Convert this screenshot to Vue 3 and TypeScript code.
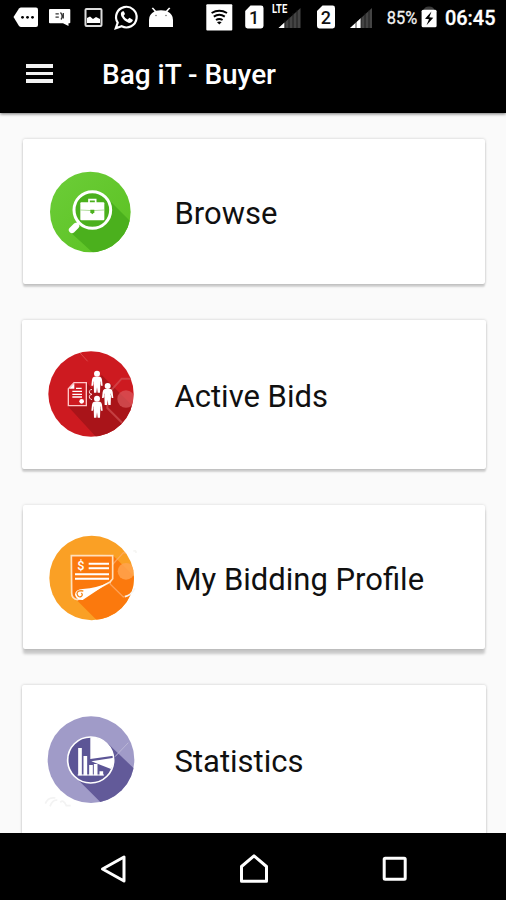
<script setup lang="ts">
interface MenuEntry {
  id: 'browse' | 'bids' | 'profile' | 'stats'
  label: string
}

const entries: MenuEntry[] = [
  { id: 'browse', label: 'Browse' },
  { id: 'bids', label: 'Active Bids' },
  { id: 'profile', label: 'My Bidding Profile' },
  { id: 'stats', label: 'Statistics' },
]
</script>

<template>
  <div class="screen">
    <header class="status-bar">
      <!-- notifications -->
      <svg width="42" height="36" viewBox="0 0 42 36">
        <path d="M13.5 17 19 8.5Q20 7.5 21 7.5H36Q38 7.5 38 9.5V25Q38 27 36 27H21Q20 27 19 26Z" fill="#fff" />
        <g fill="#000"><circle cx="22.5" cy="17.3" r="1.4" /><circle cx="27.5" cy="17.3" r="1.4" /><circle cx="32.5" cy="17.3" r="1.4" /></g>
      </svg>
      <svg width="36" height="36" viewBox="42 0 36 36">
        <path d="M50 9H69.5Q70.3 9 70.3 10V22.5Q70.3 23.3 69.5 23.3H68.5V26L63 23.3H50Q49 23.3 49 22.5V10Q49 9 50 9Z" fill="#fff" />
        <path d="M55.5 13.8H58.8M55.5 17.2H58.8M60.5 12.5Q63.5 16 61 19.5M63.3 13V18.5" fill="none" stroke="#333" stroke-width="1.3" />
      </svg>
      <svg width="32" height="36" viewBox="78 0 32 36">
        <rect x="85.5" y="9" width="16" height="17" rx="1" fill="none" stroke="#ddd" stroke-width="2" />
        <path d="M87 23V18L90 16.5 93 19 96 17 100 19V23Z" fill="#fff" />
      </svg>
      <svg width="34" height="36" viewBox="110 0 34 36">
        <path d="M115.8 28.2 117.7 22.7A10.3 10.3 0 1 1 121.7 26.3Z" fill="none" stroke="#fff" stroke-width="2.2" />
        <path d="M122 11.5Q120 13 121.5 16.5Q124 21 129 23Q132 23 133 20L129.5 17.8 127.6 19.5Q124.5 18 123.7 15.7L125 14 123.8 11.3Z" fill="#fff" />
      </svg>
      <svg width="56" height="36" viewBox="144 0 56 36">
        <path d="M149 27V20Q149 14 154.5 11.5L151.7 8.2 153 7.4 156 10.8Q161 9.5 166 10.8L169 7.4 170.4 8.2 167.5 11.5Q173 14 173 20V27Z" fill="#fff" />
        <g fill="#555"><circle cx="156" cy="15.5" r=".7" /><circle cx="166" cy="15.5" r=".7" /></g>
      </svg>
      <!-- connectivity -->
      <svg width="38" height="36" viewBox="200 0 38 36">
        <rect x="206.3" y="4.3" width="26" height="26.2" rx="1" fill="#fff" />
        <path d="M211.6 13Q219.3 8.5 227 13M213.8 16.6Q219.3 13 224.8 16.6M216 20Q219.3 17.8 222.6 20" fill="none" stroke="#000" stroke-width="2" />
        <path d="M217 22.2Q219.3 20.8 221.6 22.2L219.3 24.6Z" fill="#000" />
      </svg>
      <svg width="30" height="36" viewBox="238 0 30 36">
        <path d="M250.5 5.6H261Q263.5 5.6 263.5 8V26Q263.5 28.4 261 28.4H247.5Q245.2 28.4 245.2 26V11Z" fill="#fff" />
        <text class="sim" x="249" y="24">1</text>
      </svg>
      <svg width="40" height="36" viewBox="268 0 40 36">
        <path d="M278.5 28 300.5 8V28Z" fill="#444" />
        <path d="M278.5 28 284.5 22.6V28Z" fill="#fff" />
        <path d="M285 20V28M289 17V28M293 13V28M297 10V28" stroke="#151515" stroke-width=".8" />
        <text class="lte" x="272" y="12.7" textLength="15.2" lengthAdjust="spacingAndGlyphs">LTE</text>
      </svg>
      <svg width="34" height="36" viewBox="308 0 34 36">
        <path d="M322.5 5.6H332.7Q335 5.6 335 8V26Q335 28.4 332.7 28.4H319.3Q317 28.4 317 26V11Z" fill="#fff" />
        <text class="sim" x="320.8" y="24.3">2</text>
      </svg>
      <svg width="38" height="36" viewBox="342 0 38 36">
        <path d="M350 28 372 8V28Z" fill="#444" />
        <path d="M350 28 361 18V28Z" fill="#fff" />
        <path d="M356 21V28M361 18V28M365 13V28M369 10V28" stroke="#151515" stroke-width=".8" />
      </svg>
      <svg width="40" height="36" viewBox="380 0 40 36">
        <text class="percent" x="386.7" y="24.2" textLength="30.5" lengthAdjust="spacingAndGlyphs">85%</text>
      </svg>
      <svg width="20" height="36" viewBox="420 0 20 36">
        <path d="M424 10Q424 6.5 429 6.5T434 10Z" fill="#3a3a3a" />
        <rect x="421.6" y="9.8" width="15" height="17.4" rx="1.5" fill="#fff" />
        <path d="M431.5 11.5 425 18.8 429 19.3 426.5 25.3 433.3 17.8 429.3 17.2Z" fill="#000" />
      </svg>
      <svg width="66" height="36" viewBox="440 0 66 36">
        <text class="clock" x="445" y="25" textLength="50.5" lengthAdjust="spacingAndGlyphs">06:45</text>
      </svg>
    </header>

    <div class="app-bar">
      <div class="burger"><i /><i /><i /></div>
      <h1>Bag iT - Buyer</h1>
    </div>

    <main>
      <section v-for="entry in entries" :key="entry.id" class="card" :class="entry.id">
        <svg v-if="entry.id === 'browse'" class="badge" width="110" height="105" viewBox="0 0 330 315">
          <defs>
            <linearGradient id="green" x1="0" y1="0" x2="1" y2="1"><stop offset="0" stop-color="#6ccd38" /><stop offset="1" stop-color="#5bc122" /></linearGradient>
            <clipPath id="clipGreen"><circle cx="166" cy="156" r="121" /></clipPath>
          </defs>
          <circle cx="166" cy="156" r="121" fill="url(#green)" />
          <g clip-path="url(#clipGreen)">
            <path d="M214 112 330 228 230 330 108 218 150 190Z" fill="#4bb01d" />
          </g>
          <circle cx="172" cy="150" r="55" fill="#4bb01d" stroke="#fff" stroke-width="9" />
          <path d="M130 188 125 194" stroke="#fff" stroke-width="8" />
          <path d="M123 198 111 210" stroke="#fff" stroke-width="19" stroke-linecap="round" />
          <path d="M162 130V119H182V130" fill="none" stroke="#fff" stroke-width="5" />
          <rect x="136" y="127" width="72" height="54" rx="3" fill="#fff" />
          <path d="M136 150Q172 154 208 150" fill="none" stroke="#8ccb70" stroke-width="2" />
          <path d="M166 149H178V157L172 163 166 157Z" fill="#4bb01d" />
        </svg>

        <svg v-else-if="entry.id === 'bids'" class="badge" width="110" height="110" viewBox="0 0 330 330">
          <defs>
            <clipPath id="clipRed"><circle cx="168" cy="162" r="128" /></clipPath>
            <g id="person">
              <circle cx="0" cy="-23" r="9" />
              <path d="M-9-14H9Q14-12 15-5L17 13H12L9-2V9H-9V-2L-12 13H-17L-15-5Q-14-12-9-14Z" />
              <path d="M-10 5H10L9 34H2L0 18-2 34H-9Z" />
            </g>
          </defs>
          <circle cx="168" cy="162" r="128" fill="#cd1a20" />
          <g clip-path="url(#clipRed)">
            <path d="M200 105 330 235 210 320 98 198 155 195 155 127 170 145Z" fill="#a91419" />
            <path d="M330 116H260L217 164V204L265 252" fill="none" stroke="#d35457" stroke-width="6" opacity=".65" />
            <circle cx="273" cy="177" r="26" fill="#d95659" opacity=".75" />
            <path d="M129 32 158 64" stroke="#d94a4c" stroke-width="3" />
          </g>
          <path d="M117 128H154V197H100V146Z" fill="none" stroke="#ffc6c6" stroke-width="4" />
          <path d="M102 146 118 130V146Z" fill="#fff" />
          <path d="M123 145H140M112 154H141M112 163H141M112 171H141" stroke="#fff" stroke-width="4" />
          <circle cx="140" cy="184" r="7" fill="#fff" />
          <path d="M171 148Q160 150 164 160L171 163 164 166Q160 176 171 179" fill="none" stroke="#ffd7d7" stroke-width="3" />
          <g fill="#fff"><use href="#person" x="186" y="124" /><use href="#person" x="218" y="161" /><use href="#person" x="186" y="199" /></g>
        </svg>

        <svg v-else-if="entry.id === 'profile'" class="badge" width="110" height="110" viewBox="0 0 330 330">
          <defs><clipPath id="clipOrange"><circle cx="170" cy="159" r="127" /></clipPath></defs>
          <circle cx="170" cy="159" r="127" fill="#faa025" />
          <g clip-path="url(#clipOrange)">
            <path d="M232 89 330 187V310H210L112 212 109 92Z" fill="#fb790d" />
            <path d="M300 89 265 83 226 126V178L265 216 310 200" fill="none" stroke="#ffae6c" stroke-width="4" opacity=".75" />
            <circle cx="273" cy="139" r="25" fill="#ffa34f" opacity=".85" />
          </g>
          <path d="M109 92H233V161L225 171 128 224Q110 222 110 204Z" fill="#fb790d" stroke="#ffe0bd" stroke-width="5" />
          <path d="M224 171Q187 189 143 192Q120 194 120 209Q125 226 143 225Z" fill="#fff" />
          <path d="M145 198Q127 195 126 206Q129 219 139 214Q145 210 139 204" fill="none" stroke="#f58a22" stroke-width="4" />
          <path d="M161 116H222M161 130H222M120 148H222M120 161H222" stroke="#fff" stroke-width="6" />
          <text class="dollar" x="127" y="136">$</text>
          <path d="M295 79Q304 74 303 84M270 215Q286 212 300 190" fill="none" stroke="#f5f5f3" stroke-width="5" />
        </svg>

        <svg v-else class="badge" width="110" height="130" viewBox="0 0 330 390">
          <defs><clipPath id="clipPurple"><circle cx="168" cy="164" r="130" /></clipPath></defs>
          <path d="M31 296Q39 275 61 279M45 304Q53 283 67 286M76 292Q85 282 94 302H107" fill="none" stroke="#f3f3f3" stroke-width="5" />
          <circle cx="168" cy="164" r="130" fill="#a09bc8" />
          <g clip-path="url(#clipPurple)">
            <path d="M217 114 330 222V300L215 310 117 212Z" fill="#625a99" />
            <path d="M240 155 280 113" stroke="#bab6d6" stroke-width="3" />
          </g>
          <circle cx="167" cy="165" r="69" fill="#5c5596" stroke="#fff" stroke-width="5" />
          <path d="M166 97A69 69 0 0 1 235 152L166 162Z" fill="#fff" />
          <path d="M169 169 237 158Q237 178 228 192Z" fill="#fff" />
          <path d="M135 129V211M151 153V211M168 180V211M182 177V211M199 199V211" stroke="#fff" stroke-width="11" />
          <path d="M128 210H207" stroke="#fff" stroke-width="3" />
        </svg>
        <span class="label">{{ entry.label }}</span>
      </section>
    </main>

    <nav class="nav-bar">
      <svg width="30" height="36" viewBox="0 0 30 36"><path d="M3.5 18 25 6V30Z" /></svg>
      <svg width="32" height="36" viewBox="1 0 32 36"><path d="M3.5 30.2V15.5L16 4.8 28.5 15.5V30.2Z" /></svg>
      <svg width="30" height="36" viewBox="0 0 30 36"><rect x="4.2" y="7.2" width="21" height="21" rx="1" /></svg>
    </nav>
  </div>
</template>

<style>
body {
  margin: 0;
  overflow: hidden;
}
</style>

<style scoped>
.screen {
  width: 506px;
  height: 900px;
  display: flex;
  flex-direction: column;
  overflow: hidden;
  background: #fafafa;
  font-family: Roboto, sans-serif;
  color: #101010;
}

svg {
  display: block;
  flex: none;
}

.status-bar {
  display: flex;
  flex: none;
  height: 36px;
  background: #000;
}

.sim {
  font-size: 18px;
  font-weight: 500;
  fill: #111;
}

.lte {
  font-size: 12px;
  font-weight: 700;
  fill: #fff;
}

.percent {
  font-size: 17.5px;
  fill: #f2f2f2;
  stroke: #f2f2f2;
  stroke-width: 0.3px;
}

.clock {
  font-size: 20px;
  font-weight: 500;
  fill: #fff;
  stroke: #fff;
  stroke-width: 0.3px;
}

.dollar {
  font-size: 38px;
  font-weight: 500;
  fill: #fff;
}

.app-bar {
  display: flex;
  flex: none;
  align-items: center;
  box-sizing: border-box;
  height: 77px;
  padding: 0 0 2px 26px;
  background: #000;
  box-shadow: 0 1px 3px rgba(0, 0, 0, 0.55);
}

.burger {
  display: grid;
  gap: 4px;
  width: 27px;
  margin-right: 49px;
}

.burger i {
  height: 3.7px;
  background: #f2f2f2;
}

h1 {
  margin: 3px 0 0;
  font-size: 28px;
  line-height: 34px;
  font-weight: 500;
  letter-spacing: -0.02px;
  white-space: nowrap;
  color: #fff;
}

main {
  display: flex;
  flex: 1;
  flex-direction: column;
  min-height: 0;
  overflow: hidden;
  padding: 26px 20px 0 22px;
}

.card {
  display: flex;
  flex: none;
  align-items: flex-start;
  box-sizing: border-box;
  border-radius: 2px;
  background: #fff;
  box-shadow: 0 0 3px rgba(0, 0, 0, 0.2), 0 3px 2px rgba(0, 0, 0, 0.16);
}

.browse {
  height: 145px;
  margin: 0 1px 36px;
  padding: 21px 0 0 12px;
}

.bids {
  height: 149px;
  margin-bottom: 36px;
  padding: 20px 0 0 13px;
}

.profile {
  height: 144px;
  margin: 0 1px 36px;
  padding: 20px 0 0 12px;
  box-shadow: 0 0 3px rgba(0, 0, 0, 0.15), 0 5px 3px rgba(0, 0, 0, 0.2);
}

.stats {
  height: 160px;
  padding: 20px 0 0 13px;
}

.label {
  margin: 36px 0 0 29.5px;
  font-size: 31px;
  line-height: 36px;
  white-space: nowrap;
}

.bids .label,
.stats .label {
  margin-top: 39px;
}

.profile .label {
  margin-top: 37px;
}

.nav-bar {
  display: flex;
  flex: none;
  justify-content: space-between;
  box-sizing: border-box;
  height: 67px;
  padding: 18px 96px 0 99px;
  background: #000;
}

.nav-bar svg {
  fill: none;
  stroke: #fff;
  stroke-width: 3;
  stroke-linejoin: round;
}
</style>
